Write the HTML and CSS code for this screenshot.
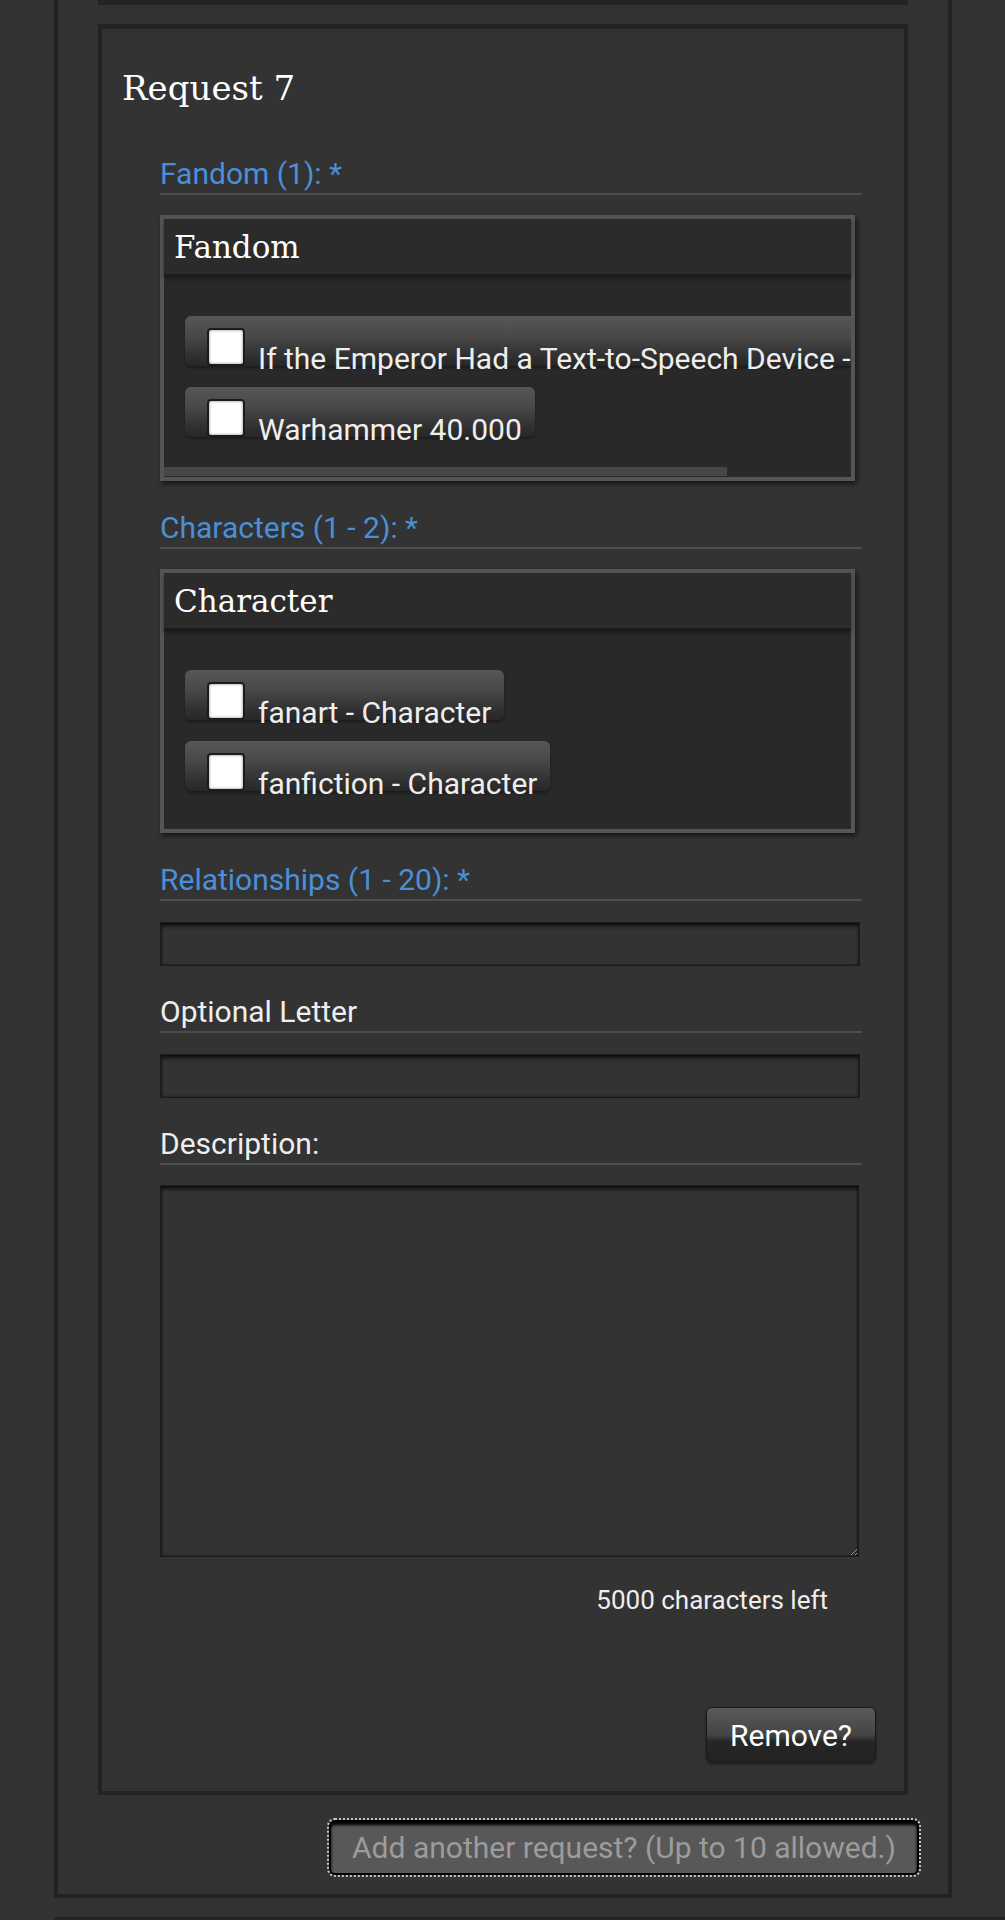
FILE: index.html
```html
<!DOCTYPE html>
<html lang="en">
<head>
  <meta charset="UTF-8">
  <meta name="viewport" content="width=device-width, initial-scale=1.0">
  <title>Request 7</title>
  <link rel="stylesheet" href="styles.css">
</head>
<body>
  <div class="wrapper">
    <div class="request request-prev"></div>

    <div class="request request-main">
      <h3 class="heading">Request 7</h3>

      <div class="fields">
        <div class="label label-first required">Fandom (1): *</div>
        <div class="picker">
          <h4 class="picker-title">Fandom</h4>
          <div class="picker-body picker-scroll">
            <label class="option"><input type="checkbox" class="check"><span class="option-text">If the Emperor Had a Text-to-Speech Device -</span></label>
            <label class="option"><input type="checkbox" class="check"><span class="option-text">Warhammer 40.000</span></label>
            <div class="scrollbar"></div>
          </div>
        </div>

        <div class="label required">Characters (1 - 2): *</div>
        <div class="picker">
          <h4 class="picker-title">Character</h4>
          <div class="picker-body">
            <label class="option"><input type="checkbox" class="check"><span class="option-text">fanart - Character</span></label>
            <label class="option"><input type="checkbox" class="check"><span class="option-text">fanfiction - Character</span></label>
          </div>
        </div>

        <div class="label required">Relationships (1 - 20): *</div>
        <input type="text" class="text-input">

        <div class="label label-tight">Optional Letter</div>
        <input type="text" class="text-input">

        <div class="label label-tight">Description:</div>
        <textarea class="text-area"></textarea>

        <p class="counter">5000 characters left</p>
      </div>

      <div class="actions">
        <button class="btn">Remove?</button>
      </div>
    </div>

    <div class="add-row">
      <button class="btn-add" disabled>Add another request? (Up to 10 allowed.)</button>
    </div>
  </div>
  <div class="footer"></div>
</body>
</html>
```

FILE: styles.css
```css
* { box-sizing: border-box; }
body { margin: 0; background: #333; color: #eee; font-family: Roboto, "Liberation Sans", sans-serif; }

.wrapper { width: 898px; margin-left: 54px; border: 4px solid #232323; border-top: 0; padding: 0 27px 19px; }
.request { margin: 0 13px; border: 4px solid #232323; }
.request-prev { height: 5px; border-top: 0; border-bottom-width: 5px; }
.request-main { margin-top: 19px; border-top-width: 5px; padding: 0 28px 28px 0; }

.heading { margin: 39px 0 0 20px; font: 400 34px/40px "DejaVu Serif", serif; color: #fff; }

.fields { margin: 0 14px 0 58px; }
.label { margin-top: 30px; padding-bottom: 2px; border-bottom: 2px solid #4d4d4d; font-size: 30px; line-height: 34px; color: #eee; }
.label-first { margin-top: 49px; }
.label-tight { margin-top: 29px; }
.required { color: #4a90d9; }

.picker { margin: 20px 7px 0 0; border: 4px solid #555; background: #292929; box-shadow: 2px 3px 5px rgba(0, 0, 0, 0.6); }
.picker-title { margin: 0; height: 57px; padding: 8px 0 0 10px; background: #2b2b2b; border-bottom: 2px solid #1b1b1b; box-shadow: 0 2px 4px rgba(0, 0, 0, 0.45); font: 400 31px/40px "DejaVu Serif", serif; color: #fff; }
.picker-body { padding: 40px 0 38px 21px; overflow: hidden; }
.picker-scroll { padding-bottom: 0; }

.option { display: flex; align-items: flex-end; gap: 13px; width: max-content; height: 50px; padding: 0 13px 0 22px; border-radius: 6px; background: linear-gradient(#575757, #484848 40%, #2f2f2f 82%, #272727); box-shadow: 0 2px 3px rgba(0, 0, 0, 0.35); white-space: nowrap; }
.option + .option { margin-top: 21px; }
.check { appearance: none; -webkit-appearance: none; margin: 0; width: 38px; height: 38px; border: 2px solid #1c1c1c; border-radius: 4px; background: #fff; box-shadow: inset 0 0 3px rgba(0, 0, 0, 0.5); }
.option-text { margin-bottom: -7px; font-size: 30px; line-height: 28px; color: #eee; }

.scrollbar { width: 563px; height: 9px; margin: 30px 0 1px -21px; background: #474747; }

.text-input { display: block; width: 700px; height: 44px; margin-top: 21px; border: 1px solid #1b1b1b; background: #333; box-shadow: inset 0 4px 4px -1px rgba(0, 0, 0, 0.7), inset 0 0 3px rgba(0, 0, 0, 0.6); }
.text-area { display: block; width: 699px; height: 372px; margin-top: 20px; border: 1px solid #1b1b1b; background: #333; box-shadow: inset 0 4px 4px -1px rgba(0, 0, 0, 0.7), inset 0 0 3px rgba(0, 0, 0, 0.6); }

.counter { margin: 28px 34px 0 0; text-align: right; font-size: 26px; line-height: 30px; color: #eee; }

.actions { display: flex; justify-content: flex-end; margin-top: 92px; }
.btn { width: 170px; height: 56px; border: 1px solid #1a1a1a; border-radius: 6px; background: linear-gradient(#5a5a5a, #444 50%, #262626 62%, #222); box-shadow: 0 1px 3px rgba(0, 0, 0, 0.5); font-family: Roboto, sans-serif; font-size: 30px; color: #fff; }

.add-row { display: flex; justify-content: flex-end; margin: 25px 2px 0 0; }
.btn-add { width: 590px; height: 55px; border: 2px solid #000; border-radius: 6px; background: #585858; box-shadow: inset 0 3px 3px #000; outline: 2px dotted #c8c8c8; font-family: Roboto, sans-serif; font-size: 30px; color: #9c9c9c; }

.footer { margin: 19px 0 0 54px; border-top: 3px solid #232323; }
```
